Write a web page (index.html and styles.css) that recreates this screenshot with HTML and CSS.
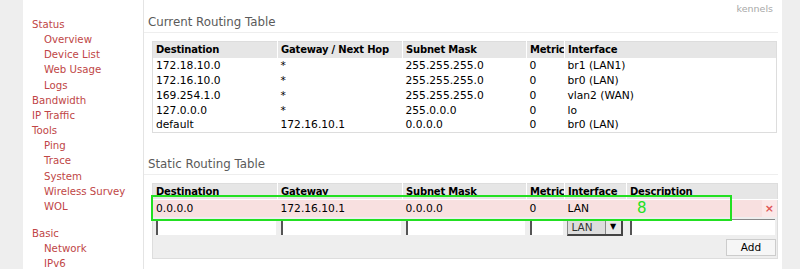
FILE: index.html
```html
<!DOCTYPE html>
<html lang="en">
<head>
  <meta charset="UTF-8">
  <title>Routing</title>
  <link rel="stylesheet" href="styles.css">
</head>
<body>
  <div class="page">
    <nav class="sidebar">
      <a class="menu">Status</a>
      <a class="sub">Overview</a>
      <a class="sub">Device List</a>
      <a class="sub">Web Usage</a>
      <a class="sub">Logs</a>
      <a class="menu">Bandwidth</a>
      <a class="menu">IP Traffic</a>
      <a class="menu">Tools</a>
      <a class="sub">Ping</a>
      <a class="sub">Trace</a>
      <a class="sub">System</a>
      <a class="sub">Wireless Survey</a>
      <a class="sub">WOL</a>
      <a class="menu group">Basic</a>
      <a class="sub">Network</a>
      <a class="sub">IPv6</a>
    </nav>

    <main class="content">
      <div class="user">kennels</div>

      <section class="section">
        <h2 class="section-title">Current Routing Table</h2>
        <table class="grid current">
          <thead>
            <tr>
              <th class="c-dest">Destination</th>
              <th class="c-gw">Gateway / Next Hop</th>
              <th class="c-mask">Subnet Mask</th>
              <th class="c-metric">Metric</th>
              <th>Interface</th>
            </tr>
          </thead>
          <tbody>
            <tr><td>172.18.10.0</td><td>*</td><td>255.255.255.0</td><td>0</td><td>br1 (LAN1)</td></tr>
            <tr><td>172.16.10.0</td><td>*</td><td>255.255.255.0</td><td>0</td><td>br0 (LAN)</td></tr>
            <tr><td>169.254.1.0</td><td>*</td><td>255.255.255.0</td><td>0</td><td>vlan2 (WAN)</td></tr>
            <tr><td>127.0.0.0</td><td>*</td><td>255.0.0.0</td><td>0</td><td>lo</td></tr>
            <tr><td>default</td><td>172.16.10.1</td><td>0.0.0.0</td><td>0</td><td>br0 (LAN)</td></tr>
          </tbody>
        </table>
      </section>

      <section class="section static-section">
        <h2 class="section-title">Static Routing Table</h2>
        <div class="static-wrap">
          <table class="grid static">
            <thead>
              <tr>
                <th class="c-dest">Destination</th>
                <th class="c-gw">Gateway</th>
                <th class="c-mask">Subnet Mask</th>
                <th class="c-metric">Metric</th>
                <th class="c-iface">Interface</th>
                <th class="c-desc">Description</th>
                <th class="c-del"></th>
              </tr>
            </thead>
            <tbody>
              <tr class="entry">
                <td>0.0.0.0</td><td>172.16.10.1</td><td>0.0.0.0</td><td>0</td><td>LAN</td><td></td>
                <td class="del">×</td>
              </tr>
              <tr class="edit">
                <td><span class="field"></span></td>
                <td><span class="field"></span></td>
                <td><span class="field"></span></td>
                <td><span class="field"></span></td>
                <td><span class="select"><span class="select-val">LAN</span><span class="select-btn">▼</span></span></td>
                <td colspan="2"><span class="field"></span></td>
              </tr>
              <tr class="foot">
                <td colspan="7"><span class="btn">Add</span></td>
              </tr>
            </tbody>
          </table>
          <div class="mark"></div>
          <div class="mark-num">8</div>
        </div>
      </section>
    </main>
  </div>
</body>
</html>
```

FILE: styles.css
```css
* {
  margin: 0;
  padding: 0;
  box-sizing: border-box;
}

body {
  background: #eeeeee;
  font-family: 'DejaVu Sans', Verdana, sans-serif;
  color: #000;
  overflow: hidden;
}

.page {
  display: flex;
  width: 759px;
  height: 269px;
  margin-left: 23px;
  background: #ffffff;
}

.sidebar {
  width: 121px;
  flex-shrink: 0;
  border-right: 1px solid #e4e4e4;
  padding-top: 17px;
  display: flex;
  flex-direction: column;
}

.sidebar a {
  display: block;
  font-size: 10.2px;
  line-height: 15.15px;
  color: #c04646;
}

.sidebar .menu {
  padding-left: 9px;
}

.sidebar .sub {
  padding-left: 21px;
}

.sidebar .group {
  margin-top: 12px;
}

.content {
  flex: 1;
  padding: 0 4px 0 0;
  font-size: 10.7px;
}

.user {
  text-align: right;
  font-size: 9.5px;
  line-height: 14px;
  color: #a8a8a8;
  padding: 2px 5px 0 0;
  margin-bottom: -2px;
}

.section-title {
  font-size: 11.8px;
  font-weight: normal;
  color: #5a5a5a;
  line-height: 16px;
  padding: 0 0 2px 4px;
  border-bottom: 1px solid #eeeeee;
  margin-bottom: 8px;
}

.static-section {
  margin-top: 23px;
}

.grid {
  margin-left: 8px;
  width: 625px;
  border-collapse: collapse;
  border: 1px solid #dddddd;
  table-layout: fixed;
}

.grid th,
.grid td {
  text-align: left;
  padding: 0 3px;
  white-space: nowrap;
  overflow: hidden;
}

.grid th {
  background: #e6e6e6;
  font-weight: bold;
  font-size: 10px;
  letter-spacing: -0.2px;
  height: 16px;
  border-left: 1px solid #ffffff;
}

.grid th:first-child,
.grid th.c-del {
  border-left: none;
}

.grid td {
  height: 15px;
}

.c-dest { width: 125px; }
.c-gw { width: 125px; }
.c-mask { width: 124px; }
.c-metric { width: 38px; }
.c-iface { width: 62px; }
.c-desc { width: 135px; }
.c-del { width: 16px; }

.static {
  background: #eeeeee;
}

.static .entry td {
  background: #f8e0e0;
  height: 17px;
  border-top: 1px solid #ffffff;
}

.static .entry .del {
  background: #fbe8e8;
  color: #e05555;
  font-size: 11px;
  font-weight: bold;
  text-align: center;
  padding: 0;
}

.static .edit td {
  height: 20px;
  padding: 2px 2px 2px 3px;
}

.field {
  display: block;
  height: 16px;
  background: #ffffff;
  border-left: 2px solid #555555;
  border-top: 1px solid #888888;
}

.select {
  display: flex;
  height: 17px;
  width: 56px;
  margin-left: -1px;
  border: 1px solid #888888;
  border-right: 2px solid #444444;
  border-bottom: 2px solid #444444;
  background: #dddddd;
  font-size: 10.5px;
}

.select-val {
  flex: 1;
  padding-left: 4px;
  line-height: 14px;
  color: #333333;
}

.select-btn {
  width: 16px;
  border-left: 1px solid #888888;
  background: #e8e8e8;
  font-size: 8px;
  text-align: center;
  line-height: 14px;
}

.static .foot td {
  height: 21px;
  text-align: right;
  padding: 1px 1px 2px 0;
}

.btn {
  display: inline-block;
  width: 50px;
  height: 17px;
  line-height: 15px;
  text-align: center;
  background: #f6f6f6;
  border: 1px solid #cccccc;
  font-size: 10.5px;
}

.static-wrap {
  position: relative;
}

.mark {
  position: absolute;
  left: 7px;
  top: 12px;
  width: 581px;
  height: 26px;
  border: 2px solid #22e022;
}

.mark-num {
  position: absolute;
  left: 493px;
  top: 17px;
  font-size: 15px;
  line-height: 16px;
  color: #22e022;
}
```
